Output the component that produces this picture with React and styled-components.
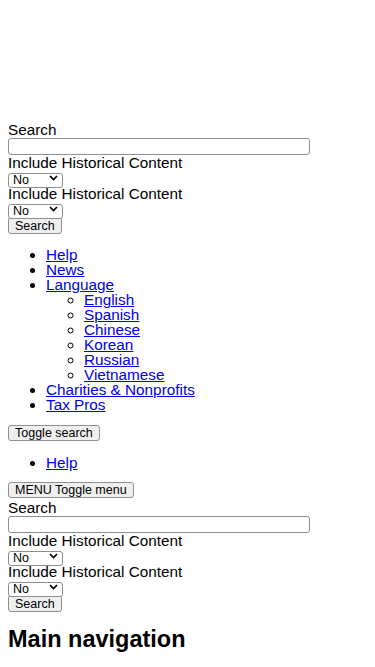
import React from 'react';
import styled, { createGlobalStyle } from 'styled-components';

const GlobalStyle = createGlobalStyle`
  body {
    margin: 8px;
    background: #fff;
    color: #000;
    font-family: "Liberation Sans", Arial, sans-serif;
    font-size: 15.3px;
    line-height: 15px;
  }
`;

const Header = styled.header`
  padding-top: 114px;
`;

const SearchForm = styled.form`
  display: flex;
  flex-direction: column;
  align-items: flex-start;
  margin-top: ${(p) => p.$mt || 0}px;
`;

const Label = styled.label`
  display: block;
  line-height: 16px;
`;

const TextInput = styled.input`
  box-sizing: border-box;
  width: 302px;
  height: 17px;
  margin: 0;
  padding: 0 2px;
  border: 1px solid #8f8f8f;
  border-radius: 3px;
  background: #fff;
  font: 12.5px "Liberation Sans", Arial, sans-serif;
`;

const SelectWrap = styled.div`
  position: relative;
  width: 55px;
  height: 15px;
`;

const Select = styled.select`
  appearance: none;
  box-sizing: border-box;
  width: 55px;
  height: 15px;
  margin: 0;
  padding: 0 0 0 4px;
  border: 1px solid #8f8f8f;
  border-radius: 3px;
  background: #fff;
  color: #000;
  font: 12.5px/13px "Liberation Sans", Arial, sans-serif;
`;

const Chevron = styled.svg`
  position: absolute;
  right: 5px;
  top: 4px;
  width: 9px;
  height: 6px;
  pointer-events: none;
`;

const Button = styled.button`
  box-sizing: border-box;
  height: ${(p) => p.$h || 17}px;
  margin: 0;
  padding: 0 6px;
  border: 1px solid #8f8f8f;
  border-radius: 3px;
  background: #efefef;
  color: #000;
  font: 12.5px "Liberation Sans", Arial, sans-serif;
  white-space: nowrap;
`;

const List = styled.ul`
  margin: ${(p) => p.$m || '0'};
  padding-left: 38px;
  list-style: ${(p) => (p.$nested ? 'circle' : 'disc')};
`;

const Item = styled.li`
  line-height: 15px;
`;

const Link = styled.a`
  color: #0000ee;
  text-decoration: underline;
`;

const Heading = styled.h2`
  margin: 14px 0;
  font-size: 23.5px;
  line-height: 27px;
  font-weight: bold;
`;

function HistorySelect() {
  return (
    <SelectWrap>
      <Select defaultValue="No">
        <option>No</option>
        <option>Yes</option>
      </Select>
      <Chevron viewBox="0 0 9 6">
        <path d="M1 1l3.5 3.5L8 1" fill="none" stroke="#000" strokeWidth="1.7" />
      </Chevron>
    </SelectWrap>
  );
}

function Search({ mt }) {
  return (
    <SearchForm $mt={mt} onSubmit={(e) => e.preventDefault()}>
      <Label>Search</Label>
      <TextInput type="text" />
      <Label>Include Historical Content</Label>
      <HistorySelect />
      <Label>Include Historical Content</Label>
      <HistorySelect />
      <Button type="submit">Search</Button>
    </SearchForm>
  );
}

const languages = ['English', 'Spanish', 'Chinese', 'Korean', 'Russian', 'Vietnamese'];

export default function App() {
  return (
    <>
      <GlobalStyle />
      <Header>
        <Search />
        <List $m="13px 0 12px">
          <Item><Link href="#">Help</Link></Item>
          <Item><Link href="#">News</Link></Item>
          <Item>
            <Link href="#">Language</Link>
            <List $nested>
              {languages.map((l) => (
                <Item key={l}><Link href="#">{l}</Link></Item>
              ))}
            </List>
          </Item>
          <Item><Link href="#">Charities &amp; Nonprofits</Link></Item>
          <Item><Link href="#">Tax Pros</Link></Item>
        </List>
        <Button $h={16}>Toggle search</Button>
        <List $m="14px 0 11px">
          <Item><Link href="#">Help</Link></Item>
        </List>
        <Button $h={16}>MENU Toggle menu</Button>
        <Search mt={2} />
      </Header>
      <Heading>Main navigation</Heading>
    </>
  );
}
